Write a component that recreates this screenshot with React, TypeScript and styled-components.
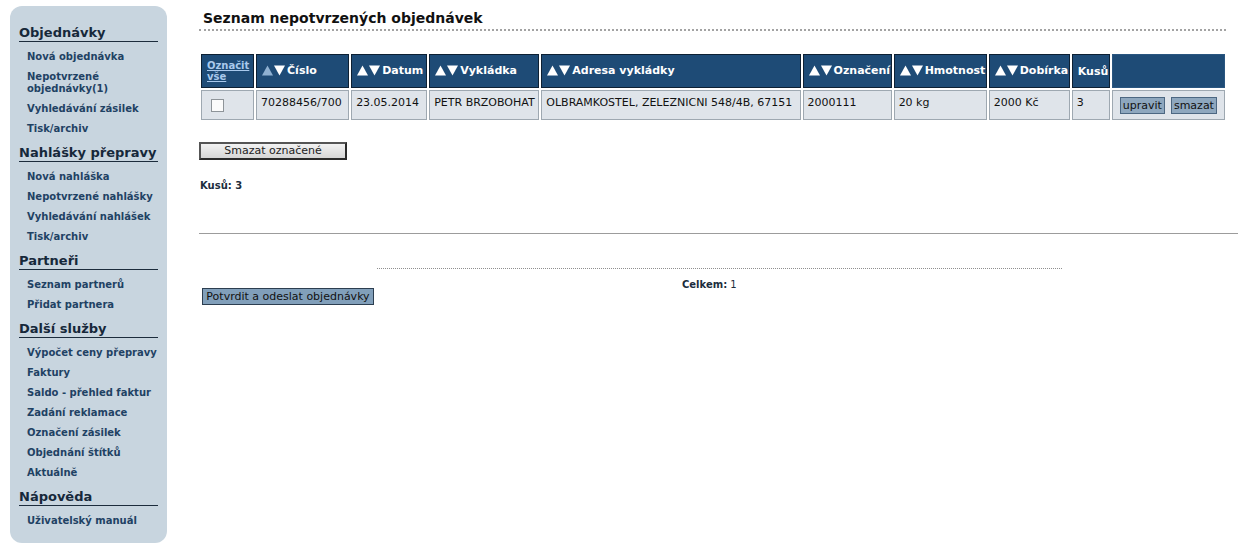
import React from "react";
import styled, { createGlobalStyle } from "styled-components";

const Global = createGlobalStyle`
  * { box-sizing: border-box; }
  html, body { margin: 0; padding: 0; background: #ffffff; }
  body { font-family: Verdana, "DejaVu Sans", sans-serif; font-size: 11px; color: #1a2a3a; }
`;

const Page = styled.div`
  display: flex;
  align-items: flex-start;
  padding: 6px 0 0 10px;
  gap: 32px;
  width: 1240px;
`;

const Sidebar = styled.nav`
  width: 157px;
  flex: none;
  background: #c8d5df;
  border-radius: 12px;
  padding: 19px 9px 12px 9px;
  display: flex;
  flex-direction: column;
`;

const Section = styled.div<{ $first?: boolean }>`
  margin-top: ${(p) => (p.$first ? 0 : 6)}px;
`;

const SectionTitle = styled.div`
  font-size: 13px;
  font-weight: bold;
  line-height: 16px;
  color: #16283a;
  border-bottom: 1px solid #1c2c3c;
  margin-bottom: 5px;
  white-space: nowrap;
`;

const NavLink = styled.a`
  display: block;
  padding: 4px 0 4px 8px;
  font-size: 10px;
  font-weight: bold;
  line-height: 12px;
  color: #1f4264;
  text-decoration: none;
  white-space: nowrap;
`;

const Main = styled.main`
  flex: 1;
  display: flex;
  flex-direction: column;
`;

const Title = styled.h1`
  margin: 0;
  width: 1027px;
  font-size: 14px;
  font-weight: bold;
  line-height: 17px;
  color: #111;
  padding: 4px 0 2px 4px;
  border-bottom: 2px dotted #a3a3a3;
`;

const Table = styled.table`
  margin-top: 21px;
  margin-left: 0;
  border-collapse: separate;
  border-spacing: 2px;
  table-layout: fixed;
  width: 1028px;
`;

const Th = styled.th<{ $plain?: boolean }>`
  background: #1e4b76;
  border: 1px solid ${(p) => (p.$plain ? "#2a5680" : "#0d2033")};
  color: #ffffff;
  font-size: 11px;
  font-weight: bold;
  text-align: left;
  padding: 0 4px 0 5px;
  height: 34px;
  line-height: 11px;
  white-space: nowrap;
  vertical-align: middle;
`;

const HeadLink = styled.a`
  color: #a9c9ec;
  font-size: 10px;
  text-decoration: underline;
  white-space: normal;
  display: block;
  line-height: 11px;
`;

const SortLabel = styled.span`
  display: inline-flex;
  align-items: center;
  gap: 2px;
`;

const Td = styled.td`
  background: #dfe4ea;
  border: 1px solid #9ea8b1;
  font-size: 11px;
  color: #111;
  padding: 5px 4px 0 4px;
  height: 30px;
  line-height: 13px;
  vertical-align: top;
  white-space: nowrap;
  overflow: hidden;
`;

const Check = styled.input`
  appearance: none;
  width: 13px;
  height: 13px;
  margin: 3px 0 0 5px;
  background: #fbfbfb;
  border: 1px solid #8e9499;
  display: block;
`;

const SmallButton = styled.button<{ $first?: boolean }>`
  font-family: Verdana, "DejaVu Sans", sans-serif;
  font-size: 11px;
  color: #111;
  background: #8ea7be;
  border: 1px solid #4c6782;
  height: 17px;
  padding: 0 2px;
  line-height: 13px;
  margin: 1px 0 0 ${(p) => (p.$first ? 3 : 6)}px;
`;

const GrayButton = styled.button`
  margin-top: 20px;
  width: 148px;
  height: 18px;
  font-family: Verdana, "DejaVu Sans", sans-serif;
  font-size: 11px;
  color: #222;
  border: 2px solid #2a2a2a;
  border-top-color: #555;
  border-left-color: #555;
  background: linear-gradient(#f2f2f2, #d6d6d6);
  padding: 0;
  line-height: 14px;
`;

const Count = styled.div`
  margin-top: 20px;
  margin-left: 1px;
  font-size: 10px;
  font-weight: bold;
  color: #1c2d3d;
  line-height: 12px;
`;

const Rule = styled.hr`
  margin: 41px 0 0 0;
  border: none;
  border-top: 1px solid #9c9c9c;
  width: 1039px;
`;

const Bottom = styled.div`
  display: grid;
  grid-template-columns: 178px 685px;
  margin-top: 34px;
`;

const BottomLeft = styled.div`
  display: flex;
  align-items: flex-end;
  padding-left: 3px;
`;

const BottomMid = styled.div`
  border-top: 1px dotted #8f8f8f;
  padding-top: 10px;
  padding-left: 305px;
  height: 37px;
  font-size: 10px;
  line-height: 12px;
  color: #1c2d3d;
`;

const Strong = styled.b`
  font-weight: bold;
`;

const BlueButton = styled.button`
  font-family: Verdana, "DejaVu Sans", sans-serif;
  font-size: 11px;
  color: #111;
  background: #819fba;
  border: 1px solid #2c3e50;
  height: 17px;
  width: 172px;
  padding: 0;
  line-height: 13px;
`;

const Arrows: React.FC<{ active?: boolean }> = ({ active }) => (
  <svg width="23" height="11" viewBox="0 0 23 11">
    <polygon points="0,10.5 5.5,0.5 11,10.5" fill={active ? "#8fb1d2" : "#ffffff"} />
    <polygon points="12,0.5 23,0.5 17.5,10.5" fill="#ffffff" />
  </svg>
);

const Sorted: React.FC<{ label: string; active?: boolean }> = ({ label, active }) => (
  <SortLabel>
    <Arrows active={active} />
    {label}
  </SortLabel>
);

const nav = [
  {
    title: "Objednávky",
    links: ["Nová objednávka", "Nepotvrzené\nobjednávky(1)", "Vyhledávání zásilek", "Tisk/archiv"],
  },
  {
    title: "Nahlášky přepravy",
    links: ["Nová nahláška", "Nepotvrzené nahlášky", "Vyhledávání nahlášek", "Tisk/archiv"],
  },
  { title: "Partneři", links: ["Seznam partnerů", "Přidat partnera"] },
  {
    title: "Další služby",
    links: [
      "Výpočet ceny přepravy",
      "Faktury",
      "Saldo - přehled faktur",
      "Zadání reklamace",
      "Označení zásilek",
      "Objednání štítků",
      "Aktuálně",
    ],
  },
  { title: "Nápověda", links: ["Uživatelský manuál"] },
];

const cols = [53, 93, 76, 110, 259, 89, 93, 81, 38, 113];

export default function App() {
  return (
    <>
      <Global />
      <Page>
        <Sidebar>
          {nav.map((s, i) => (
            <Section key={s.title} $first={i === 0}>
              <SectionTitle>{s.title}</SectionTitle>
              {s.links.map((l) => (
                <NavLink key={l} href="#">
                  {l.split("\n").map((part, j) => (
                    <React.Fragment key={j}>
                      {j > 0 && <br />}
                      {part}
                    </React.Fragment>
                  ))}
                </NavLink>
              ))}
            </Section>
          ))}
        </Sidebar>
        <Main>
          <Title>Seznam nepotvrzených objednávek</Title>
          <Table>
            <colgroup>
              {cols.map((w, i) => (
                <col key={i} style={{ width: w }} />
              ))}
            </colgroup>
            <thead>
              <tr>
                <Th>
                  <HeadLink href="#">Označit vše</HeadLink>
                </Th>
                <Th><Sorted label="Číslo" active /></Th>
                <Th><Sorted label="Datum" /></Th>
                <Th><Sorted label="Vykládka" /></Th>
                <Th><Sorted label="Adresa vykládky" /></Th>
                <Th><Sorted label="Označení" /></Th>
                <Th><Sorted label="Hmotnost" /></Th>
                <Th><Sorted label="Dobírka" /></Th>
                <Th>Kusů</Th>
                <Th $plain />
              </tr>
            </thead>
            <tbody>
              <tr>
                <Td><Check type="checkbox" /></Td>
                <Td>70288456/700</Td>
                <Td>23.05.2014</Td>
                <Td>PETR BRZOBOHAT</Td>
                <Td>OLBRAMKOSTEL, ZELEZNICNI 548/4B, 67151</Td>
                <Td>2000111</Td>
                <Td>20 kg</Td>
                <Td>2000 Kč</Td>
                <Td>3</Td>
                <Td>
                  <SmallButton $first>upravit</SmallButton>
                  <SmallButton>smazat</SmallButton>
                </Td>
              </tr>
            </tbody>
          </Table>
          <div>
            <GrayButton>Smazat označené</GrayButton>
          </div>
          <Count>Kusů: 3</Count>
          <Rule />
          <Bottom>
            <BottomLeft>
              <BlueButton>Potvrdit a odeslat objednávky</BlueButton>
            </BottomLeft>
            <BottomMid>
              <Strong>Celkem:</Strong> 1
            </BottomMid>
          </Bottom>
        </Main>
      </Page>
    </>
  );
}
